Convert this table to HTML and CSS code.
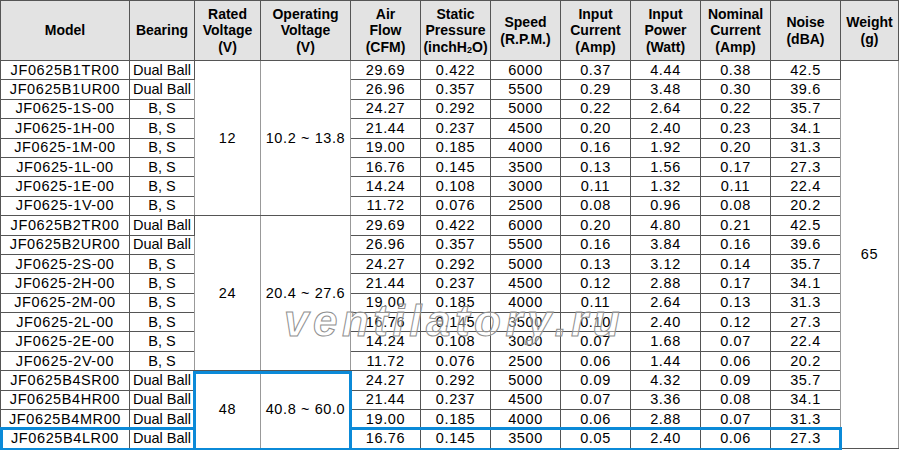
FILE: index.html
```html
<!DOCTYPE html>
<html>
<head>
<meta charset="utf-8">
<link rel="stylesheet" href="styles.css">
</head>
<body>
<div class="sheet">
<table class="spec">
<colgroup>
<col class="c-model"><col class="c-bearing"><col class="c-rated"><col class="c-op"><col class="c-n"><col class="c-n"><col class="c-n"><col class="c-n"><col class="c-n"><col class="c-n"><col class="c-n"><col class="c-weight">
</colgroup>
<thead>
<tr>
<th>Model</th><th>Bearing</th><th>Rated<br>Voltage<br>(V)</th><th>Operating<br>Voltage<br>(V)</th><th>Air<br>Flow<br>(CFM)</th><th>Static<br>Pressure<br>(inchH<sub>2</sub>O)</th><th>Speed<br>(R.P.M.)</th><th>Input<br>Current<br>(Amp)</th><th>Input<br>Power<br>(Watt)</th><th>Nominal<br>Current<br>(Amp)</th><th>Noise<br>(dBA)</th><th>Weight<br>(g)</th>
</tr>
</thead>
<tbody>
<tr><td>JF0625B1TR00</td><td class="brg">Dual Ball</td><td rowspan="8" class="soft">12</td><td rowspan="8" class="soft">10.2 ~ 13.8</td><td>29.69</td><td>0.422</td><td>6000</td><td>0.37</td><td>4.44</td><td>0.38</td><td>42.5</td><td rowspan="20" class="soft">65</td></tr>
<tr><td>JF0625B1UR00</td><td class="brg">Dual Ball</td><td>26.96</td><td>0.357</td><td>5500</td><td>0.29</td><td>3.48</td><td>0.30</td><td>39.6</td></tr>
<tr><td>JF0625-1S-00</td><td class="brg">B, S</td><td>24.27</td><td>0.292</td><td>5000</td><td>0.22</td><td>2.64</td><td>0.22</td><td>35.7</td></tr>
<tr><td>JF0625-1H-00</td><td class="brg">B, S</td><td>21.44</td><td>0.237</td><td>4500</td><td>0.20</td><td>2.40</td><td>0.23</td><td>34.1</td></tr>
<tr><td>JF0625-1M-00</td><td class="brg">B, S</td><td>19.00</td><td>0.185</td><td>4000</td><td>0.16</td><td>1.92</td><td>0.20</td><td>31.3</td></tr>
<tr><td>JF0625-1L-00</td><td class="brg">B, S</td><td>16.76</td><td>0.145</td><td>3500</td><td>0.13</td><td>1.56</td><td>0.17</td><td>27.3</td></tr>
<tr><td>JF0625-1E-00</td><td class="brg">B, S</td><td>14.24</td><td>0.108</td><td>3000</td><td>0.11</td><td>1.32</td><td>0.11</td><td>22.4</td></tr>
<tr><td>JF0625-1V-00</td><td class="brg">B, S</td><td>11.72</td><td>0.076</td><td>2500</td><td>0.08</td><td>0.96</td><td>0.08</td><td>20.2</td></tr>
<tr><td>JF0625B2TR00</td><td class="brg">Dual Ball</td><td rowspan="8" class="soft">24</td><td rowspan="8" class="soft">20.4 ~ 27.6</td><td>29.69</td><td>0.422</td><td>6000</td><td>0.20</td><td>4.80</td><td>0.21</td><td>42.5</td></tr>
<tr><td>JF0625B2UR00</td><td class="brg">Dual Ball</td><td>26.96</td><td>0.357</td><td>5500</td><td>0.16</td><td>3.84</td><td>0.16</td><td>39.6</td></tr>
<tr><td>JF0625-2S-00</td><td class="brg">B, S</td><td>24.27</td><td>0.292</td><td>5000</td><td>0.13</td><td>3.12</td><td>0.14</td><td>35.7</td></tr>
<tr><td>JF0625-2H-00</td><td class="brg">B, S</td><td>21.44</td><td>0.237</td><td>4500</td><td>0.12</td><td>2.88</td><td>0.17</td><td>34.1</td></tr>
<tr><td>JF0625-2M-00</td><td class="brg">B, S</td><td>19.00</td><td>0.185</td><td>4000</td><td>0.11</td><td>2.64</td><td>0.13</td><td>31.3</td></tr>
<tr><td>JF0625-2L-00</td><td class="brg">B, S</td><td>16.76</td><td>0.145</td><td>3500</td><td>0.10</td><td>2.40</td><td>0.12</td><td>27.3</td></tr>
<tr><td>JF0625-2E-00</td><td class="brg">B, S</td><td>14.24</td><td>0.108</td><td>3000</td><td>0.07</td><td>1.68</td><td>0.07</td><td>22.4</td></tr>
<tr><td>JF0625-2V-00</td><td class="brg">B, S</td><td>11.72</td><td>0.076</td><td>2500</td><td>0.06</td><td>1.44</td><td>0.06</td><td>20.2</td></tr>
<tr><td>JF0625B4SR00</td><td class="brg">Dual Ball</td><td rowspan="4" class="soft">48</td><td rowspan="4" class="soft">40.8 ~ 60.0</td><td>24.27</td><td>0.292</td><td>5000</td><td>0.09</td><td>4.32</td><td>0.09</td><td>35.7</td></tr>
<tr><td>JF0625B4HR00</td><td class="brg">Dual Ball</td><td>21.44</td><td>0.237</td><td>4500</td><td>0.07</td><td>3.36</td><td>0.08</td><td>34.1</td></tr>
<tr><td>JF0625B4MR00</td><td class="brg">Dual Ball</td><td>19.00</td><td>0.185</td><td>4000</td><td>0.06</td><td>2.88</td><td>0.07</td><td>31.3</td></tr>
<tr><td>JF0625B4LR00</td><td class="brg">Dual Ball</td><td>16.76</td><td>0.145</td><td>3500</td><td>0.05</td><td>2.40</td><td>0.06</td><td>27.3</td></tr>
</tbody>
</table>
<div class="hl hl-volt"></div>
<div class="hl hl-row-left"></div>
<div class="hl hl-row-right"></div>
<div class="watermark">ventilatory.ru</div>
</div>
</body>
</html>
```
FILE: styles.css
```css
html, body {
  margin: 0;
  padding: 0;
  background: #fff;
}
.sheet {
  position: relative;
  width: 900px;
  height: 450px;
  overflow: hidden;
  font-family: "Liberation Sans", Arial, sans-serif;
  color: #000;
}
.spec {
  border-collapse: collapse;
  table-layout: fixed;
  width: 898px;
}
.c-model { width: 129px; }
.c-bearing { width: 65px; }
.c-rated { width: 66px; }
.c-op { width: 90px; }
.c-n { width: 70px; }
.c-weight { width: 58px; }
.spec th, .spec td {
  border: 1px solid #555;
  text-align: center;
  padding: 0;
  overflow: hidden;
  white-space: nowrap;
}
.spec th {
  background: #e3e3e3;
  font-size: 14px;
  font-weight: bold;
  line-height: 16.5px;
  height: 59px;
}
.spec th sub {
  font-size: 9px;
  vertical-align: -1px;
  line-height: 0;
}
.spec td {
  font-size: 14.5px;
  letter-spacing: 0.6px;
  height: 18.4px;
  line-height: 17px;
}
.spec td.brg {
  letter-spacing: 0;
}
.spec td.soft {
  border-left-color: #999;
  border-right-color: #999;
}
.hl {
  position: absolute;
  border: 3px solid #0b8ad8;
  box-sizing: border-box;
}
.hl-volt {
  left: 193px;
  top: 371px;
  width: 159px;
  height: 80px;
}
.hl-row-left {
  left: 0;
  top: 427px;
  width: 196px;
  height: 24px;
  border-right: none;
}
.hl-row-right {
  left: 349px;
  top: 427px;
  width: 493px;
  height: 24px;
  border-left: none;
}
.watermark {
  position: absolute;
  left: 284px;
  top: 296px;
  font-family: "Liberation Sans", Arial, sans-serif;
  font-style: italic;
  font-weight: bold;
  font-size: 44px;
  letter-spacing: 4.5px;
  color: rgba(255, 255, 255, 0.4);
  -webkit-text-stroke: 1px #8f8f8f;
  pointer-events: none;
}
```
